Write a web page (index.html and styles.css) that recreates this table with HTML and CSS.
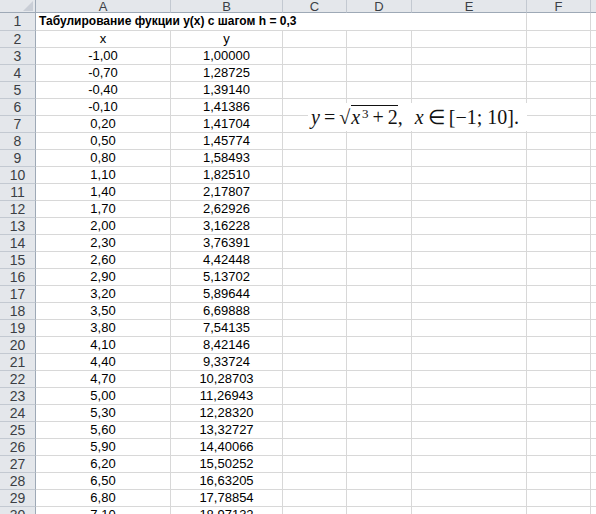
FILE: index.html
```html
<!DOCTYPE html>
<html lang="ru">
<head>
<meta charset="utf-8">
<link rel="stylesheet" href="styles.css">
</head>
<body>
<div class="sheet">
  <div class="grid" id="grid">
    <div class="corner"><svg width="10" height="10" viewBox="0 0 10 10"><polygon points="10,0 10,10 0,10" fill="#c9ced6"/></svg></div>
    <div class="ch">A</div><div class="ch">B</div><div class="ch">C</div><div class="ch">D</div><div class="ch">E</div><div class="ch">F</div><div class="ch last"></div>

    <div class="rh">1</div>
    <div class="c title">Табулирование фукции y(x) с шагом h = 0,3</div>
    <div class="c"></div><div class="c"></div>

    <div class="rh">2</div><div class="c ctr">x</div><div class="c ctr">y</div><div class="c"></div><div class="c"></div><div class="c"></div><div class="c"></div><div class="c"></div>
  </div>
  <div class="formula"><i>y</i><span class="op">=</span><span class="root">√</span><span class="rad"><i>x</i><sup>3</sup><span class="op">+</span>2</span>,<span class="gap"></span><i>x</i><span class="op">∈</span>[−1; 10].</div>
</div>
<script>
const data = [
["-1,00","1,00000"],["-0,70","1,28725"],["-0,40","1,39140"],["-0,10","1,41386"],
["0,20","1,41704"],["0,50","1,45774"],["0,80","1,58493"],["1,10","1,82510"],
["1,40","2,17807"],["1,70","2,62926"],["2,00","3,16228"],["2,30","3,76391"],
["2,60","4,42448"],["2,90","5,13702"],["3,20","5,89644"],["3,50","6,69888"],
["3,80","7,54135"],["4,10","8,42146"],["4,40","9,33724"],["4,70","10,28703"],
["5,00","11,26943"],["5,30","12,28320"],["5,60","13,32727"],["5,90","14,40066"],
["6,20","15,50252"],["6,50","16,63205"],["6,80","17,78854"],["7,10","18,97132"]];
const g = document.getElementById('grid');
let html = '';
data.forEach((d, i) => {
  html += '<div class="rh">' + (i + 3) + '</div><div class="c ctr">' + d[0] + '</div><div class="c ctr">' + d[1] + '</div><div class="c"></div><div class="c"></div><div class="c"></div><div class="c"></div><div class="c"></div>';
});
g.insertAdjacentHTML('beforeend', html);
</script>
</body>
</html>
```
FILE: styles.css
```css
html, body {
  margin: 0;
  padding: 0;
  background: #fff;
  overflow: hidden;
}
.sheet {
  position: relative;
  width: 596px;
  height: 514px;
  overflow: hidden;
}
.grid {
  display: grid;
  grid-template-columns: 36px 135px 112px 64px 65px 115px 64px 60px;
  grid-template-rows: 13px 18px;
  grid-auto-rows: 17px;
  font-family: "Liberation Sans", Arial, sans-serif;
  font-size: 13px;
  color: #000;
}
.corner {
  background: #e4e7eb;
  border-right: 1px solid #9ea9b6;
  border-bottom: 1px solid #9ea9b6;
  display: flex;
  align-items: flex-end;
  justify-content: flex-end;
  padding: 0 2px 1px 0;
  box-sizing: border-box;
}
.corner svg { display: block; }
.ch {
  background: #e4e7eb;
  border-right: 1px solid #c3c9d1;
  border-bottom: 1px solid #9ea9b6;
  box-sizing: border-box;
  font-size: 13px;
  line-height: 13px;
  color: #3b3f45;
  text-align: center;
  overflow: hidden;
}
.rh {
  background: #e4e7eb;
  border-right: 1px solid #9ea9b6;
  border-bottom: 1px solid #c3c9d1;
  box-sizing: border-box;
  font-size: 14px;
  color: #3b3f45;
  text-align: center;
  line-height: 16px;
}
.c {
  border-right: 1px solid #d8d8d8;
  border-bottom: 1px solid #d8d8d8;
  box-sizing: border-box;
  line-height: 16px;
  white-space: nowrap;
  overflow: hidden;
}
.ctr { text-align: center; }
.title {
  grid-column: span 5;
  font-weight: bold;
  font-size: 12px;
  padding-left: 3px;
  line-height: 17px;
}
.formula {
  position: absolute;
  left: 308px;
  top: 103px;
  width: 219px;
  height: 28px;
  background: #fff;
  box-sizing: border-box;
  padding-left: 3px;
  font-family: "Liberation Serif", serif;
  font-size: 20px;
  line-height: 28px;
  color: #111;
  white-space: nowrap;
}
.formula i { font-style: italic; }
.op { margin: 0 4px; }
.root { margin-right: 1px; }
.gap { display: inline-block; width: 12px; }
.rad {
  border-top: 1px solid #111;
  line-height: 20px;
  padding-top: 1px;
  display: inline-block;
}
.formula sup {
  font-size: 13px;
  vertical-align: 6px;
  line-height: 0;
  margin-left: 2px;
}
```
